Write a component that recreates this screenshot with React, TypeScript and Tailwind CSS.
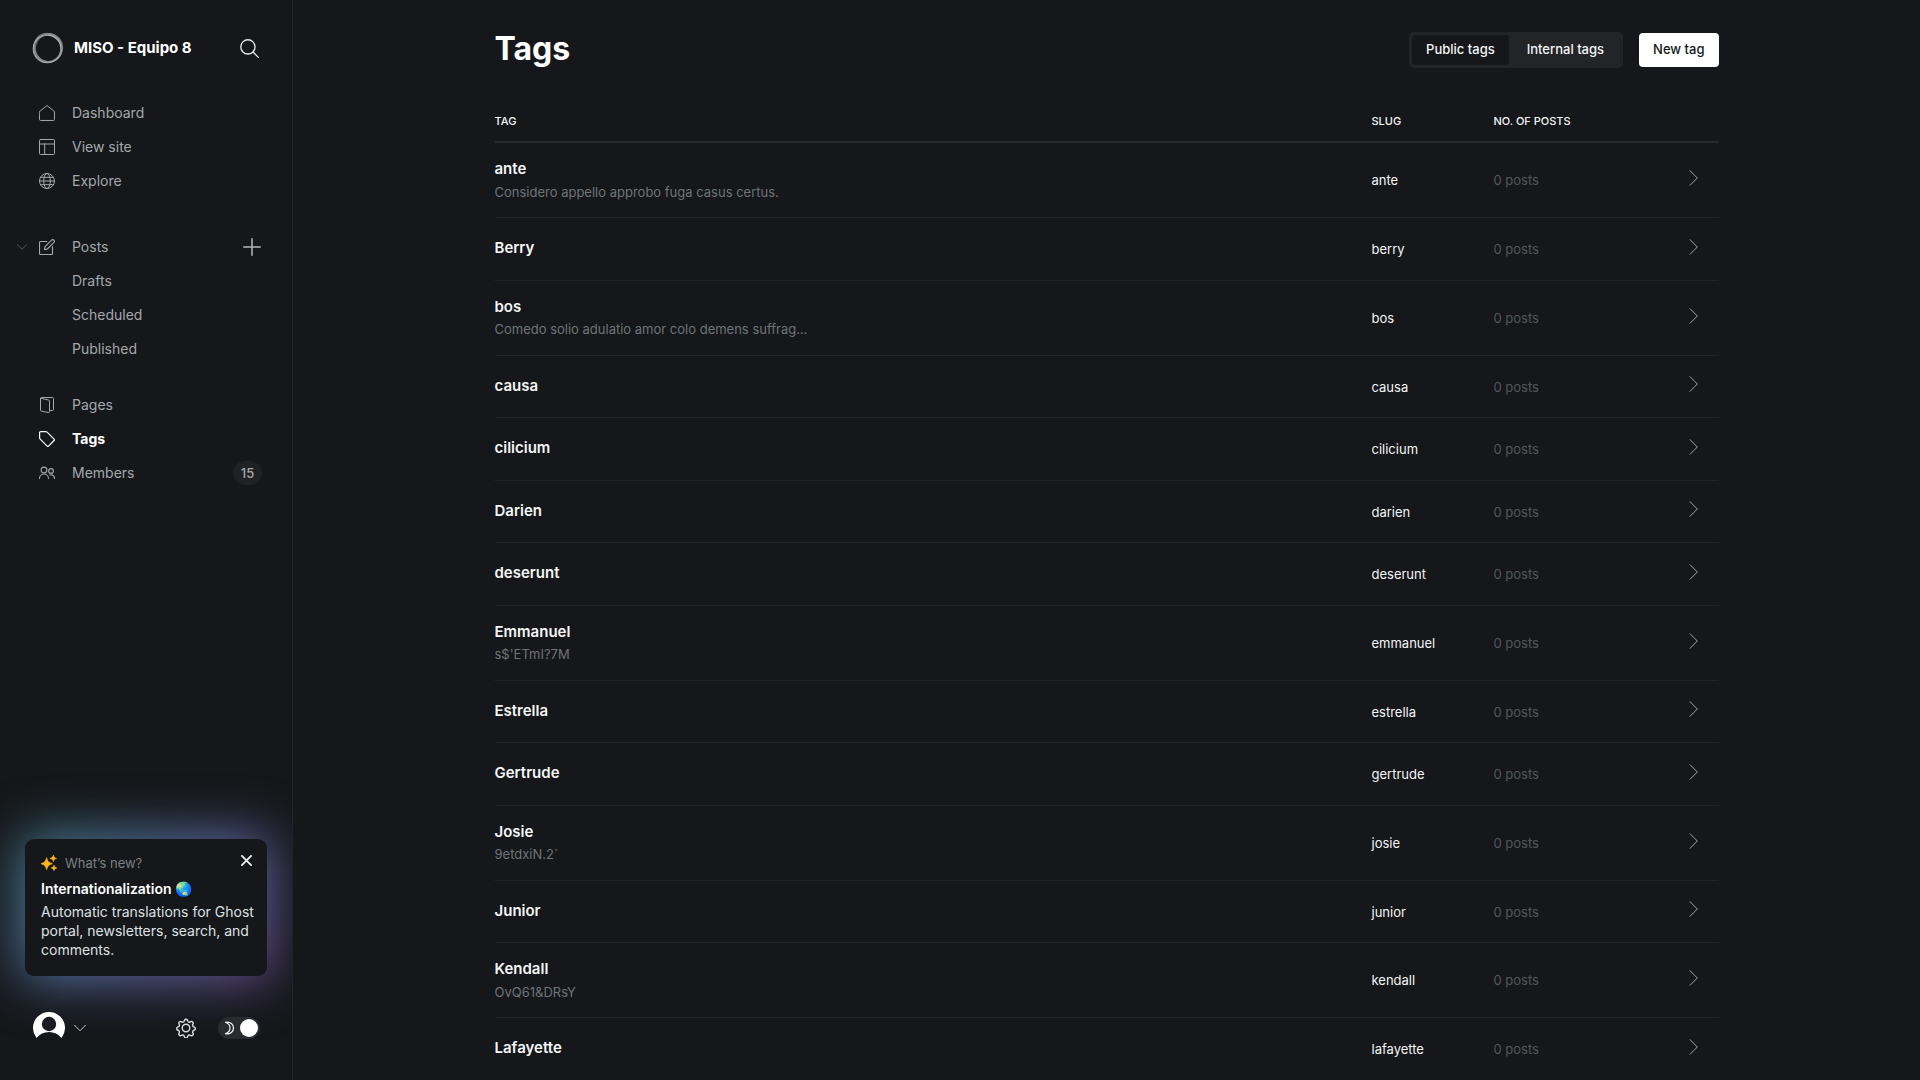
import React from "react";

type Tag = { name: string; slug: string; description?: string };

const tags: Tag[] = [
  { name: "ante", slug: "ante", description: "Considero appello approbo fuga casus certus." },
  { name: "Berry", slug: "berry" },
  { name: "bos", slug: "bos", description: "Comedo solio adulatio amor colo demens suffrag…" },
  { name: "causa", slug: "causa" },
  { name: "cilicium", slug: "cilicium" },
  { name: "Darien", slug: "darien" },
  { name: "deserunt", slug: "deserunt" },
  { name: "Emmanuel", slug: "emmanuel", description: "s$'ETmI?7M" },
  { name: "Estrella", slug: "estrella" },
  { name: "Gertrude", slug: "gertrude" },
  { name: "Josie", slug: "josie", description: "9etdxiN.2`" },
  { name: "Junior", slug: "junior" },
  { name: "Kendall", slug: "kendall", description: "OvQ61&DRsY" },
  { name: "Lafayette", slug: "lafayette" },
];

function Icon({ children, className = "size-4", width = 1.5 }: { children: React.ReactNode; className?: string; width?: number }) {
  return (
    <svg viewBox="0 0 24 24" fill="none" stroke="currentColor" strokeWidth={width} strokeLinecap="round" strokeLinejoin="round" className={className} aria-hidden="true">
      {children}
    </svg>
  );
}

const HomeIcon = () => (
  <Icon>
    <path d="M.8 9.8 12 .8l11.2 9v12a1.400 1.400 0 0 1-1.400 1.400H2.200A1.400 1.400 0 0 1 .8 21.800Z" />
  </Icon>
);
const LayoutIcon = () => (
  <Icon>
    <rect x=".75" y=".75" width="22.5" height="22.5" rx="1.5" />
    <path d="M.75 7.500h22.500M8.500 7.500v15.750" />
  </Icon>
);
const GlobeIcon = () => (
  <Icon>
    <circle cx="12" cy="12" r="11.25" />
    <ellipse cx="12" cy="12" rx="5" ry="11.25" />
    <path d="M.75 12h22.500M2.300 6.500h19.400M2.300 17.500h19.400" />
  </Icon>
);
const ComposeIcon = () => (
  <Icon width={1.7}>
    <path d="M20.250 11.250v10.500a1.500 1.500 0 0 1-1.500 1.500h-16.500a1.500 1.500 0 0 1-1.500-1.500v-16.500a1.500 1.500 0 0 1 1.500-1.500h9.500" />
    <path d="m12.600 15-4.400 1 .9-4.500 9.800-9.900a2.460 2.460 0 0 1 3.500 3.500Z" />
  </Icon>
);
const PagesIcon = () => (
  <Icon>
    <path d="M2.250 2.500v17.200a1.500 1.500 0 0 0 1.100 1.450l10.500 2.050a1.500 1.500 0 0 0 1.900-1.450V6a1.500 1.500 0 0 0-1.100-1.450Z" />
    <path d="M2.250 2.500A1.500 1.500 0 0 1 3.750.75h16.500a1.500 1.500 0 0 1 1.500 1.500v16.500a1.500 1.500 0 0 1-1.500 1.500h-4.500" />
  </Icon>
);
const TagIcon = () => (
  <Icon width={1.8}>
    <path d="M.9 2.400A1.500 1.500 0 0 1 2.400.9h7.700a3 3 0 0 1 2.100.9L22.600 12.200a1.500 1.500 0 0 1 0 2.100l-8.300 8.300a1.500 1.500 0 0 1-2.100 0L1.800 12.200a3 3 0 0 1-.9-2.100Z" />
  </Icon>
);
const MembersIcon = () => (
  <Icon width={1.7}>
    <circle cx="7.5" cy="7.5" r="4.3" />
    <path d="M.75 20.250a6.750 6.750 0 0 1 13.500 0" />
    <circle cx="18" cy="9" r="3.5" />
    <path d="M16.200 14.900a5.400 5.400 0 0 1 7.050 5.350" />
  </Icon>
);

function NavItem({ icon, label, active = false, children }: { icon?: React.ReactNode; label: string; active?: boolean; children?: React.ReactNode }) {
  return (
    <li className="flex h-[34px] items-center pr-8">
      <a href="#" className={active ? "flex grow items-center pl-[39px] font-bold text-white" : "flex grow items-center pl-[39px] text-[#a4a8ad]"}>
        <span className="w-[33px] shrink-0">{icon}</span>
        {label}
      </a>
      {children}
    </li>
  );
}

function Logo() {
  return (
    <svg viewBox="0 0 32 32" fill="none" className="size-8" aria-hidden="true">
      <circle cx="15.2" cy="16.8" r="13.8" stroke="#d0d0d0" strokeWidth="1.3" opacity=".9" />
      <circle cx="15.8" cy="16.4" r="14.1" stroke="#a8a8a8" strokeWidth="1.2" opacity=".7" />
      <ellipse cx="16.8" cy="15.6" rx="13.4" ry="14.3" stroke="#9a9a9a" strokeWidth="1.3" opacity=".65" transform="rotate(25 16 16)" />
      <ellipse cx="16.4" cy="15.6" rx="13.4" ry="14.6" stroke="#b0b0b0" strokeWidth="1.1" opacity=".6" transform="rotate(-35 16 16)" />
      <ellipse cx="16" cy="16.2" rx="13.2" ry="14" stroke="#8a8a8a" strokeWidth="1.2" opacity=".6" transform="rotate(60 16 16)" />
    </svg>
  );
}

function Sidebar() {
  return (
    <nav className="flex w-[293px] shrink-0 flex-col overflow-hidden border-r border-[#222427] text-sm" aria-label="Main">
      <header className="flex items-center pt-8 pr-[33px] pl-8">
        <Logo />
        <strong className="ml-2.5 grow text-[15px] leading-8 font-bold text-white">MISO - Equipo 8</strong>
        <button type="button" aria-label="Search" className="text-[#e8e8e8]">
          <Icon className="size-[19px]" width={1.7}>
            <circle cx="10" cy="10" r="9" />
            <path d="m16.500 16.500 6.700 6.700" />
          </Icon>
        </button>
      </header>

      <ul className="mt-8">
        <NavItem icon={<HomeIcon />} label="Dashboard" />
        <NavItem icon={<LayoutIcon />} label="View site" />
        <NavItem icon={<GlobeIcon />} label="Explore" />
      </ul>

      <ul className="mt-8">
        <li className="flex h-[34px] items-center pr-[31px]">
          <button type="button" aria-label="Collapse posts" className="ml-[17px] w-[22px] text-[#63676b]">
            <Icon className="size-2.5" width={2}>
              <path d="m1 6.500 11 11 11-11" />
            </Icon>
          </button>
          <a href="#" className="flex grow items-center text-[#a4a8ad]">
            <span className="w-[33px] shrink-0"><ComposeIcon /></span>
            Posts
          </a>
          <button type="button" aria-label="New post" className="text-[#b4b7ba]">
            <Icon className="size-[18px]" width={2}>
              <path d="M12 1v22M1 12h22" />
            </Icon>
          </button>
        </li>
        <NavItem label="Drafts" />
        <NavItem label="Scheduled" />
        <NavItem label="Published" />
      </ul>

      <ul className="mt-[22px]">
        <NavItem icon={<PagesIcon />} label="Pages" />
        <NavItem icon={<TagIcon />} label="Tags" active />
        <NavItem icon={<MembersIcon />} label="Members">
          <span className="-mr-0.5 flex h-6 w-[29px] items-center justify-center rounded-full bg-[#1f2124] text-[13px] font-medium text-[#a4a8ad]">15</span>
        </NavItem>
      </ul>

      <aside className="relative mt-auto mr-[25px] ml-[25px]">
        <div className="absolute -inset-1 rounded-xl bg-linear-[135deg] from-[#45838f] via-[#5b70a8] to-[#6f4c90] blur-[26px]" />
        <div className="relative rounded-[9px] bg-[#15171a] pt-3.5 pr-2 pb-[17px] pl-4">
          <div className="flex items-center text-[13px] leading-5 text-[#7c8084]">
            <svg viewBox="0 0 24 24" fill="#ffb41f" className="mr-2 size-4" aria-hidden="true">
              <path d="M8.500 4c1.300 5.500 3.200 7.300 8.500 9-5.300 1.600-7.200 3.500-8.500 9C7.100 16.500 5.300 14.600 0 13c5.300-1.700 7.100-3.500 8.500-9Z" stroke="#ffb41f" strokeWidth="1" strokeLinejoin="round" />
              <path d="M18.500 0c.8 3.200 1.800 4.200 5.200 5-3.400.9-4.400 1.900-5.200 5.200-.9-3.300-1.900-4.300-5.300-5.200 3.400-.8 4.400-1.800 5.300-5Z" stroke="#ffb41f" strokeWidth=".8" strokeLinejoin="round" />
              <path d="M19.500 15c.7 2.700 1.600 3.600 4.400 4.400-2.800.8-3.700 1.600-4.400 4.400-.8-2.800-1.700-3.600-4.500-4.400 2.800-.8 3.700-1.700 4.500-4.400Z" stroke="#ffb41f" strokeWidth=".8" strokeLinejoin="round" />
            </svg>
            What’s new?
          </div>
          <h2 className="mt-1 text-sm leading-6 font-semibold text-white">Internationalization 🌏</h2>
          <p className="mt-px text-sm leading-[19px] text-[#dfe1e3]">Automatic translations for Ghost portal, newsletters, search, and comments.</p>
        </div>
        <button type="button" aria-label="Dismiss" className="absolute top-4 right-[15px] text-[#f0f0f0]">
          <Icon className="size-[11px]" width={4}>
            <path d="m2 2 20 20M22 2 2 22" />
          </Icon>
        </button>
      </aside>

      <footer className="relative mt-9 mb-9 flex h-8 items-center pr-8 pl-[33px]">
        <button type="button" aria-label="Account menu" className="flex items-center gap-[9px] text-[#c8c9cb]">
          <svg viewBox="0 0 32 32" className="size-8" aria-hidden="true">
            <path d="M3.500 26A16 16 0 1 1 28.500 26C25.500 22 21 20 16 20S6.500 22 3.500 26Z" fill="#fff" />
            <circle cx="16" cy="12" r="7.2" fill="#1c1b22" />
          </svg>
          <Icon className="size-3" width={2}>
            <path d="m1 6.500 11 11 11-11" />
          </Icon>
        </button>
        <button type="button" aria-label="Settings" className="mr-[22px] ml-auto text-[#d9dadb]">
          <Icon className="size-5" width={1.7}>
            <circle cx="12" cy="12" r="4.5" />
            <path d="M10.300 2.600a1.900 1.900 0 0 1 3.400 0l.6 1.300a1.900 1.900 0 0 0 2.400.9l1.300-.5a1.900 1.900 0 0 1 2.500 2.400l-.5 1.400a1.900 1.900 0 0 0 .9 2.300l1.200.6a1.900 1.900 0 0 1 0 3.400l-1.200.6a1.900 1.900 0 0 0-.9 2.300l.5 1.400a1.900 1.900 0 0 1-2.500 2.400l-1.300-.5a1.900 1.900 0 0 0-2.400.9l-.6 1.300a1.900 1.900 0 0 1-3.400 0l-.6-1.300a1.900 1.900 0 0 0-2.400-.9l-1.300.5a1.900 1.900 0 0 1-2.500-2.400l.5-1.400a1.900 1.900 0 0 0-.9-2.300l-1.200-.6a1.900 1.900 0 0 1 0-3.400l1.200-.6a1.900 1.900 0 0 0 .9-2.300L3.500 6.700A1.900 1.900 0 0 1 6 4.300l1.300.5a1.900 1.900 0 0 0 2.400-.9Z" />
          </Icon>
        </button>
        <label className="relative flex h-[22px] w-[42px] cursor-pointer items-center rounded-full bg-[#2a2b2f] pr-0.5">
          <input type="checkbox" role="switch" defaultChecked aria-label="Dark mode" className="sr-only" />
          <svg viewBox="0 0 12 14" fill="none" stroke="#f4f4f4" strokeWidth="1.2" strokeLinejoin="round" className="ml-1.5 h-3.5 w-3" aria-hidden="true">
            <path d="M1.500 1.300C6.500.4 9.500 3.500 9.500 7s-3 6.600-8 5.700C4.500 11.500 6 9.500 6 7S4.500 2.500 1.500 1.300Z" />
          </svg>
          <span className="ml-auto size-[18px] rounded-full bg-white" />
        </label>
      </footer>
    </nav>
  );
}

export default function App() {
  return (
    <div className="flex h-screen overflow-hidden bg-[#15171a] font-[Inter,sans-serif] text-[#f4f5f6]">
      <Sidebar />
      <main className="grow overflow-hidden px-12">
        <div className="mx-auto max-w-[1224px]">
          <header className="flex items-start justify-between pt-8">
            <h1 className="text-[32px] leading-[34px] font-bold text-white">Tags</h1>
            <div className="flex items-center gap-4 text-[13px] font-medium">
              <div className="flex rounded-[5px] bg-[#222428] p-[3px]">
                <button type="button" className="h-[30px] rounded-[4px] bg-[#15171a] px-3.5">Public tags</button>
                <button type="button" className="h-[30px] rounded-[4px] pr-4 pl-[18px]">Internal tags</button>
              </div>
              <button type="button" className="h-[34px] rounded-[4px] bg-white px-3.5 text-[#15171a]">New tag</button>
            </div>
          </header>

          <table className="mt-9 w-full table-fixed border-collapse text-left">
            <thead>
              <tr className="h-[38px] border-b-2 border-[#26282c] text-[11px] uppercase">
                <th className="pb-0.5 font-medium">Tag</th>
                <th className="w-[122px] pb-0.5 font-medium">Slug</th>
                <th className="w-44 pb-0.5 font-medium">No. of posts</th>
                <th className="w-[49px]" />
              </tr>
            </thead>
            <tbody>
              {tags.map((tag) => (
                <tr key={tag.slug} className="border-b border-[#222427] text-[13px]">
                  <td className={tag.description ? "py-[15px]" : "pt-[19px] pb-5"}>
                    <h3 className="text-[15px] leading-normal font-semibold">{tag.name}</h3>
                    {tag.description && <p className="mt-0.5 leading-normal text-[#6f7478]">{tag.description}</p>}
                  </td>
                  <td className="pt-0.5">{tag.slug}</td>
                  <td className="pt-0.5 text-[#53575b]">0 posts</td>
                  <td className="pb-1 pl-4 text-[#a0a4a8]">
                    <Icon><path d="m6 1 11 11L6 23" /></Icon>
                  </td>
                </tr>
              ))}
            </tbody>
          </table>
        </div>
      </main>
    </div>
  );
}
